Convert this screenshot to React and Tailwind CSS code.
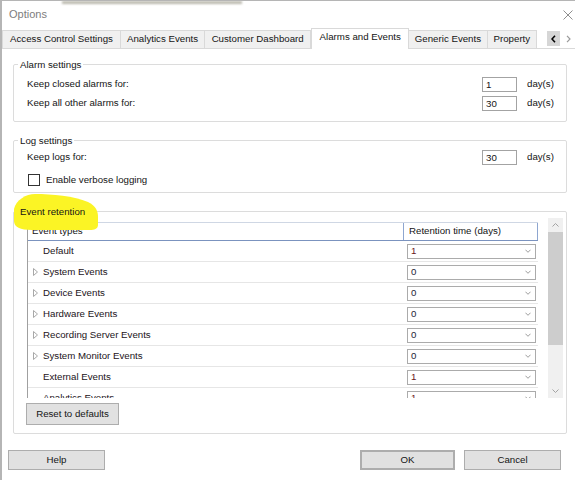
import React from "react";

const tabs = [
    { label: "Access Control Settings", w: "w-[120px]" },
    { label: "Analytics Events", w: "w-[85px]" },
    { label: "Customer Dashboard", w: "w-[107px]" },
    { label: "Alarms and Events", w: "w-[99px]", active: true },
    { label: "Generic Events", w: "w-[79px]" },
    { label: "Property", w: "w-[50px]" },
];

const events = [
    { name: "Default", value: "1" },
    { name: "System Events", value: "0", expand: true },
    { name: "Device Events", value: "0", expand: true },
    { name: "Hardware Events", value: "0", expand: true },
    { name: "Recording Server Events", value: "0", expand: true },
    { name: "System Monitor Events", value: "0", expand: true },
    { name: "External Events", value: "1" },
    { name: "Analytics Events", value: "1" },
];

function Chevron({ dir = "down", color = "#8a8a8a", size = 7 }) {
    const d = {
        down: "M0.5 0.5 L3.5 3.5 L6.5 0.5",
        up: "M0.5 3.5 L3.5 0.5 L6.5 3.5",
    }[dir];
    return (
        <svg width={size} height="4" viewBox="0 0 7 4" className="shrink-0">
            <path d={d} fill="none" stroke={color} strokeWidth="1" />
        </svg>
    );
}

function Expander() {
    return (
        <svg width="5" height="8" viewBox="0 0 5 8" className="shrink-0">
            <path d="M0.5 0.5 L4.5 4 L0.5 7.5 Z" fill="none" stroke="#a8a8a8" strokeWidth="1" />
        </svg>
    );
}

function DaysRow({ label, value, className = "" }) {
    return (
        <div className={`flex items-center h-[19px] ${className}`}>
            <span className="w-[455px]">{label}</span>
            <div className="w-[35px] h-[15px] border border-[#a3a3a3] flex items-center pl-[3px] leading-none">
                {value}
            </div>
            <span className="ml-[10px]">day(s)</span>
        </div>
    );
}

function Group({ title, className = "", children }) {
    return (
        <fieldset className={`w-[554px] border border-[#dcdcdc] rounded-[2px] ${className}`}>
            <legend className="relative z-10 ml-[4px] px-[2px] leading-[13px]">{title}</legend>
            {children}
        </fieldset>
    );
}

function Button({ children, className = "" }) {
    return (
        <button className={`h-[20px] bg-[#e1e1e1] border border-[#adadad] flex items-center justify-center leading-none ${className}`}>
            {children}
        </button>
    );
}

export default function App() {
    return (
        <div className="relative w-[575px] h-[480px] overflow-hidden bg-white border-l-2 border-t border-[#b5b5b5] font-['Liberation_Sans',Arial,sans-serif] text-[9.7px] text-[#141414]">
            {/* bit of the window behind */}
            <div className="absolute top-0 left-[60px] w-[180px] h-[3px] bg-[#77745e] opacity-50 blur-[1px]" />

            {/* title bar */}
            <div className="flex items-center justify-between h-[27px] pl-[7px] pr-[2px]">
                <span className="text-[11px] text-[#7d7d7d]">Options</span>
                <svg width="10" height="10" viewBox="0 0 10 10">
                    <path d="M0.5 0.5 L9.5 9.5 M9.5 0.5 L0.5 9.5" stroke="#8e8e8e" strokeWidth="1" />
                </svg>
            </div>

            {/* tabs */}
            <div className="flex items-end h-[20px]">
                {tabs.map((t, i) =>
                    t.active ? (
                        <div
                            key={t.label}
                            className={`${t.w} h-[21px] -mb-[1px] relative z-10 bg-white border-x border-t border-[#d9d9d9] flex items-center justify-center pb-[3px] whitespace-nowrap`}
                        >
                            {t.label}
                        </div>
                    ) : (
                        <div
                            key={t.label}
                            className={`${t.w} h-[18px] bg-[#f0f0f0] border-t border-r border-[#d9d9d9] ${i === 0 ? "border-l" : ""} flex items-center justify-center whitespace-nowrap`}
                        >
                            {t.label}
                        </div>
                    )
                )}
                <div className="ml-[10px] mb-[2px] w-[13px] h-[15px] bg-[#d6d6d6] flex items-center justify-center">
                    <svg width="5" height="8" viewBox="0 0 5 8">
                        <path d="M4 0.8 L1 4 L4 7.2" fill="none" stroke="#000" strokeWidth="1.6" />
                    </svg>
                </div>
                <div className="ml-[2px] mb-[2px] w-[13px] h-[15px] flex items-center justify-center shrink-0">
                    <svg width="5" height="8" viewBox="0 0 5 8">
                        <path d="M1 0.8 L4 4 L1 7.2" fill="none" stroke="#9a9a9a" strokeWidth="1.2" />
                    </svg>
                </div>
            </div>

            {/* tab page */}
            <div className="border-t border-[#d9d9d9] pl-[11px] pb-[6px]">
                <Group title="Alarm settings" className="mt-[9px]">
                    <div className="pt-[4px] pb-[8px] pl-[13px]">
                        <DaysRow label="Keep closed alarms for:" value="1" />
                        <DaysRow label="Keep all other alarms for:" value="30" />
                    </div>
                </Group>

                <Group title="Log settings" className="mt-[12px]">
                    <div className="pt-[1px] pb-[2px] pl-[13px]">
                        <DaysRow label="Keep logs for:" value="30" />
                        <div className="flex items-center h-[20px] mt-[3px]">
                            <div className="w-[12px] h-[12px] border border-[#333] bg-white ml-[1px]" />
                            <span className="ml-[6px]">Enable verbose logging</span>
                        </div>
                    </div>
                </Group>

                <Group title="Event retention" className="mt-[12px]">
                    <div className="pl-[13px] pb-[8px]">
                        <div className="flex items-start gap-[10px]">
                            <div className="mt-[4px] w-[511px] h-[176px] overflow-hidden border-l border-[#a0a0a0]">
                                <div className="flex h-[19px] border-t border-b border-t-[#cfd7e4] border-b-[#7b93bf]">
                                    <div className="w-[375px] pl-[4px] flex items-center">Event types</div>
                                    <div className="w-[135px] pl-[5px] flex items-center border-x border-[#8ea6d0]">
                                        Retention time (days)
                                    </div>
                                </div>
                                {events.map((e) => (
                                    <div key={e.name} className="flex h-[21px] border-b border-[#e6e6e6]">
                                        <div className="w-[375px] pl-[5px] flex items-center gap-[5px]">
                                            {e.expand ? <Expander /> : <span className="w-[5px]" />}
                                            <span className="text-[#1b1320]">{e.name}</span>
                                        </div>
                                        <div className="w-[135px] pl-[4px] flex items-center">
                                            <div className="w-[129px] h-[15px] border border-[#ababab] bg-white flex items-center justify-between pl-[3px] pr-[4px] leading-none">
                                                <span className={e.value === "1" ? "text-[#6a1818]" : "text-[#1c2436]"}>{e.value}</span>
                                                <Chevron dir="down" color="#8c8c8c" size={6} />
                                            </div>
                                        </div>
                                    </div>
                                ))}
                            </div>

                            {/* scrollbar */}
                            <div className="w-[15px] h-[180px] bg-[#f0f0f0] flex flex-col">
                                <div className="h-[14px] flex items-center justify-center">
                                    <Chevron dir="up" color="#a3a3a3" />
                                </div>
                                <div className="h-[113px] bg-[#cdcdcd]" />
                                <div className="flex-1" />
                                <div className="h-[15px] flex items-center justify-center">
                                    <Chevron dir="down" color="#a3a3a3" />
                                </div>
                            </div>
                        </div>
                        <Button className="mt-[5px] w-[93px] h-[22px] -ml-[1px]">Reset to defaults</Button>
                    </div>
                </Group>
            </div>

            {/* marker highlight over the group label */}
            <svg className="absolute left-[10px] top-[190px] blur-[0.6px]" width="90" height="42" viewBox="0 0 90 42">
                <path
                    d="M2 18 C4 9 14 3 23 3 C40 3 62 5 76 11 C84 15 86 20 86 26 L86 34 C86 38 82 39 78 39 L20 39 C8 39 2 36 2 30 Z"
                    fill="#fbf425"
                />
            </svg>

            {/* dialog buttons */}
            <div className="flex items-center mt-[10px] pl-[6px] pr-[14px]">
                <Button className="w-[97px]">Help</Button>
                <div className="flex-1" />
                <Button className="w-[95px] border-2 border-[#0078d7]">OK</Button>
                <Button className="w-[97px] ml-[9px]">Cancel</Button>
            </div>
        </div>
    );
}
